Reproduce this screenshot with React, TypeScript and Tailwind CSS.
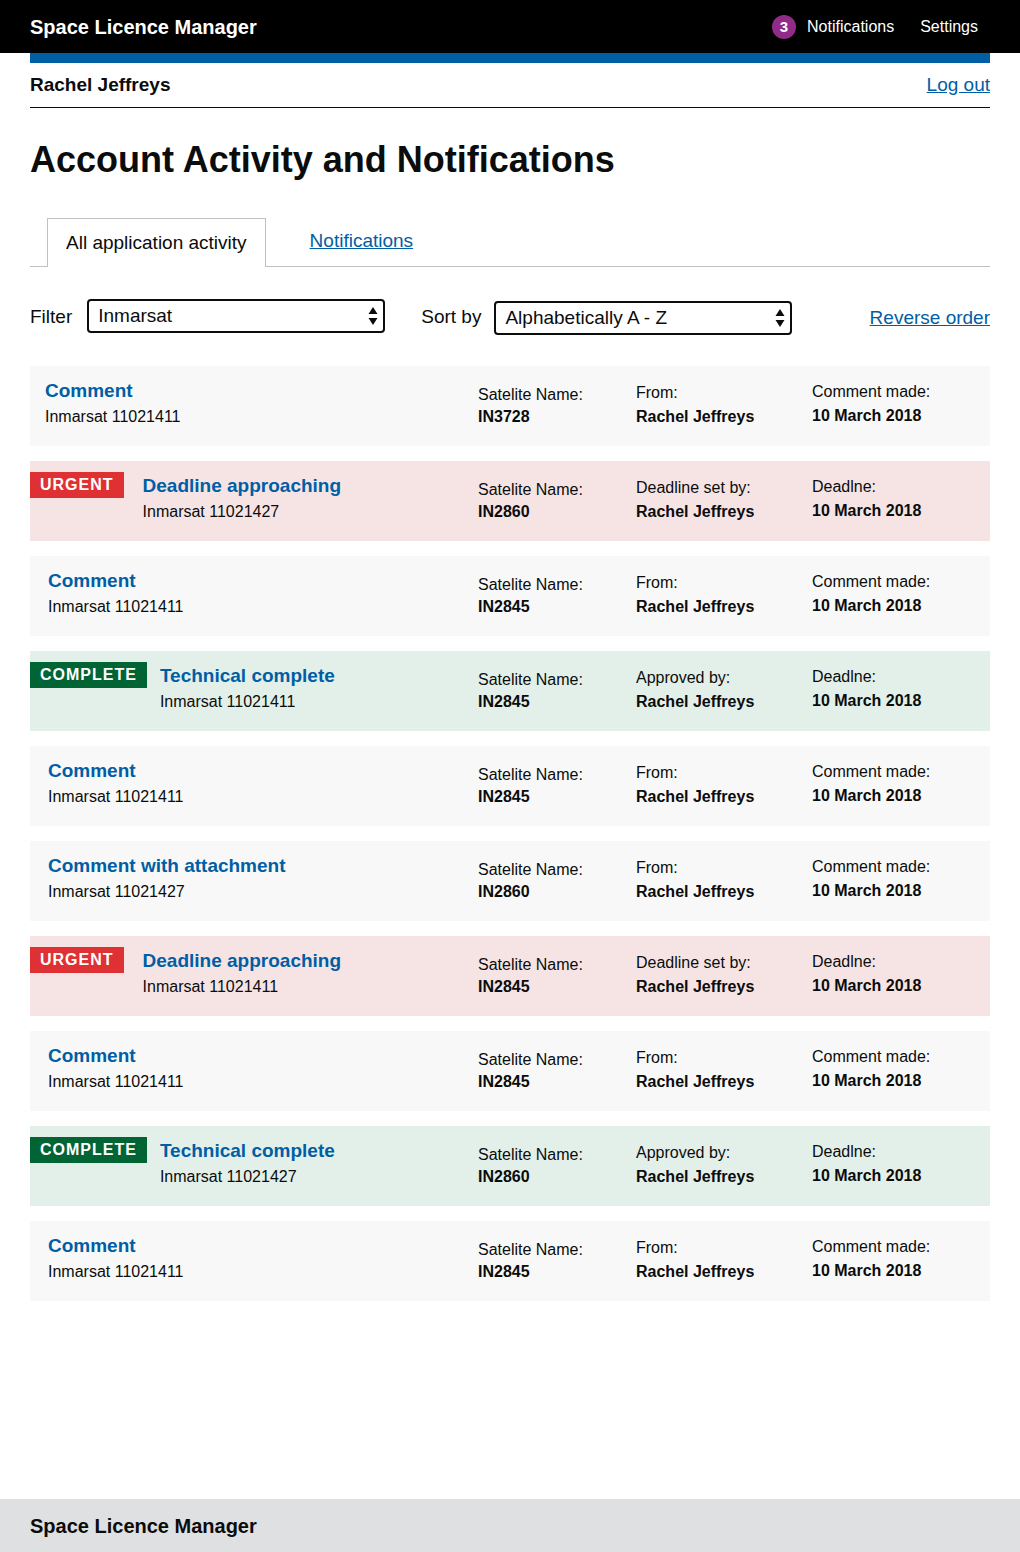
import type { ReactNode } from 'react';

type Kind = 'plain' | 'urgent' | 'complete';

interface Activity {
  kind: Kind;
  title: string;
  ref: string;
  satellite: string;
  byLabel: string;
  dateLabel: string;
}

const ACTIVITIES: Activity[] = [
  { kind: 'plain', title: 'Comment', ref: 'Inmarsat 11021411', satellite: 'IN3728', byLabel: 'From:', dateLabel: 'Comment made:' },
  { kind: 'urgent', title: 'Deadline approaching', ref: 'Inmarsat 11021427', satellite: 'IN2860', byLabel: 'Deadline set by:', dateLabel: 'Deadlne:' },
  { kind: 'plain', title: 'Comment', ref: 'Inmarsat 11021411', satellite: 'IN2845', byLabel: 'From:', dateLabel: 'Comment made:' },
  { kind: 'complete', title: 'Technical complete', ref: 'Inmarsat 11021411', satellite: 'IN2845', byLabel: 'Approved by:', dateLabel: 'Deadlne:' },
  { kind: 'plain', title: 'Comment', ref: 'Inmarsat 11021411', satellite: 'IN2845', byLabel: 'From:', dateLabel: 'Comment made:' },
  { kind: 'plain', title: 'Comment with attachment', ref: 'Inmarsat 11021427', satellite: 'IN2860', byLabel: 'From:', dateLabel: 'Comment made:' },
  { kind: 'urgent', title: 'Deadline approaching', ref: 'Inmarsat 11021411', satellite: 'IN2845', byLabel: 'Deadline set by:', dateLabel: 'Deadlne:' },
  { kind: 'plain', title: 'Comment', ref: 'Inmarsat 11021411', satellite: 'IN2845', byLabel: 'From:', dateLabel: 'Comment made:' },
  { kind: 'complete', title: 'Technical complete', ref: 'Inmarsat 11021427', satellite: 'IN2860', byLabel: 'Approved by:', dateLabel: 'Deadlne:' },
  { kind: 'plain', title: 'Comment', ref: 'Inmarsat 11021411', satellite: 'IN2845', byLabel: 'From:', dateLabel: 'Comment made:' },
];

const CARD_BG: Record<Kind, string> = {
  plain: 'bg-[#f8f8f8]',
  urgent: 'bg-[#f6e4e5]',
  complete: 'bg-[#e3f0e9]',
};

function SelectArrows() {
  return (
    <svg width="10" height="22" viewBox="0 0 10 22" className="shrink-0">
      <path d="M5 2 L9.5 9 L0.5 9 Z" fill="#0b0c0c" />
      <path d="M0.5 13 L9.5 13 L5 20 Z" fill="#0b0c0c" />
    </svg>
  );
}

function FakeSelect({ value, className }: { value: string; className: string }) {
  return (
    <div
      className={`flex h-[34px] w-[298px] items-center justify-between rounded-[4px] border-2 border-[#0b0c0c] bg-white pl-[9px] pr-[5px] text-[19px] ${className}`}
    >
      <span>{value}</span>
      <SelectArrows />
    </div>
  );
}

function Badge({ kind }: { kind: Kind }) {
  if (kind === 'plain') return null;
  const urgent = kind === 'urgent';
  return (
    <span
      className={`mt-[11px] flex h-[26px] shrink-0 items-center px-[10px] text-[16px] font-bold leading-none tracking-[1px] text-white ${
        urgent ? 'mr-[19px] bg-[#df3034]' : 'mr-[13px] bg-[#006435]'
      }`}
    >
      {urgent ? 'URGENT' : 'COMPLETE'}
    </span>
  );
}

function Field({ label, value, className, gap }: { label: string; value: string; className: string; gap: string }) {
  return (
    <div className={`text-[16px] leading-[22px] ${className}`}>
      <div>{label}</div>
      <div className={`font-bold ${gap}`}>{value}</div>
    </div>
  );
}

function ActivityCard({ item, first }: { item: Activity; first: boolean }) {
  const pad = item.kind === 'plain' ? (first ? 'pl-[15px]' : 'pl-[18px]') : 'pl-0';
  return (
    <div className={`grid h-[80px] grid-cols-[448px_158px_176px_1fr] ${CARD_BG[item.kind]}`}>
      <div className={`flex items-start ${pad}`}>
        <Badge kind={item.kind} />
        <div className="pt-[13px]">
          <a href="#" className="block text-[19px] font-bold leading-[24px] text-[#005ea5]">
            {item.title}
          </a>
          <div className="mt-[3px] text-[16px] leading-[22px]">{item.ref}</div>
        </div>
      </div>
      <Field label="Satelite Name:" value={item.satellite} className="pt-[18px]" gap="mt-0" />
      <Field label={item.byLabel} value="Rachel Jeffreys" className="pt-[16px]" gap="mt-[2px]" />
      <Field label={item.dateLabel} value="10 March 2018" className="pt-[15px]" gap="mt-[2px]" />
    </div>
  );
}

function HeaderLink({ children }: { children: ReactNode }) {
  return <a href="#" className="text-[16px] text-white">{children}</a>;
}

export default function App() {
  return (
    <div className="flex min-h-[1552px] flex-col bg-white font-['Liberation_Sans',Arial,sans-serif] text-[#0b0c0c]">
      {/* top bar */}
      <header className="flex h-[53px] items-center justify-between bg-black px-[30px]">
        <span className="text-[20px] font-bold text-white">Space Licence Manager</span>
        <nav className="flex items-center pr-[12px] pt-[1px]">
          <span className="mr-[11px] flex h-[24px] w-[24px] items-center justify-center rounded-full bg-[#912b88] text-[15px] font-bold text-white">
            3
          </span>
          <HeaderLink>Notifications</HeaderLink>
          <span className="w-[26px]" />
          <HeaderLink>Settings</HeaderLink>
        </nav>
      </header>

      <main className="flex-1 px-[30px]">
        <div className="h-[10px] bg-[#005ea5]" />

        <div className="flex h-[45px] items-center justify-between border-b border-[#0b0c0c]">
          <span className="text-[19px] font-bold">Rachel Jeffreys</span>
          <a href="#" className="text-[19px] text-[#005ea5] underline">Log out</a>
        </div>

        <h1 className="mt-[32px] text-[36px] font-bold leading-[40px]">Account Activity and Notifications</h1>

        {/* tabs */}
        <div className="mt-[38px] flex h-[49px] items-end border-b border-[#bfc1c3]">
          <div className="-mb-px ml-[17px] flex h-[49px] items-center border border-b-0 border-[#bfc1c3] bg-white px-[18px] pt-[1px] text-[19px]">
            All application activity
          </div>
          <a href="#" className="mb-[13px] ml-[44px] self-end text-[19px] leading-[24px] text-[#005ea5] underline">
            Notifications
          </a>
        </div>

        {/* filters */}
        <div className="mt-[32px] flex h-[36px] items-center text-[19px]">
          <span>Filter</span>
          <FakeSelect value="Inmarsat" className="ml-[15px] -mt-[2px]" />
          <span className="ml-[36px]">Sort by</span>
          <FakeSelect value="Alphabetically A - Z" className="ml-[13px] mt-[2px]" />
          <a href="#" className="ml-auto mt-[2px] text-[#005ea5] underline">Reverse order</a>
        </div>

        <div className="mt-[31px] flex flex-col gap-[15px]">
          {ACTIVITIES.map((item, i) => (
            <ActivityCard key={i} item={item} first={i === 0} />
          ))}
        </div>
      </main>

      <footer className="flex h-[53px] items-center bg-[#dee0e2] px-[30px]">
        <span className="text-[20px] font-bold">Space Licence Manager</span>
      </footer>
    </div>
  );
}
